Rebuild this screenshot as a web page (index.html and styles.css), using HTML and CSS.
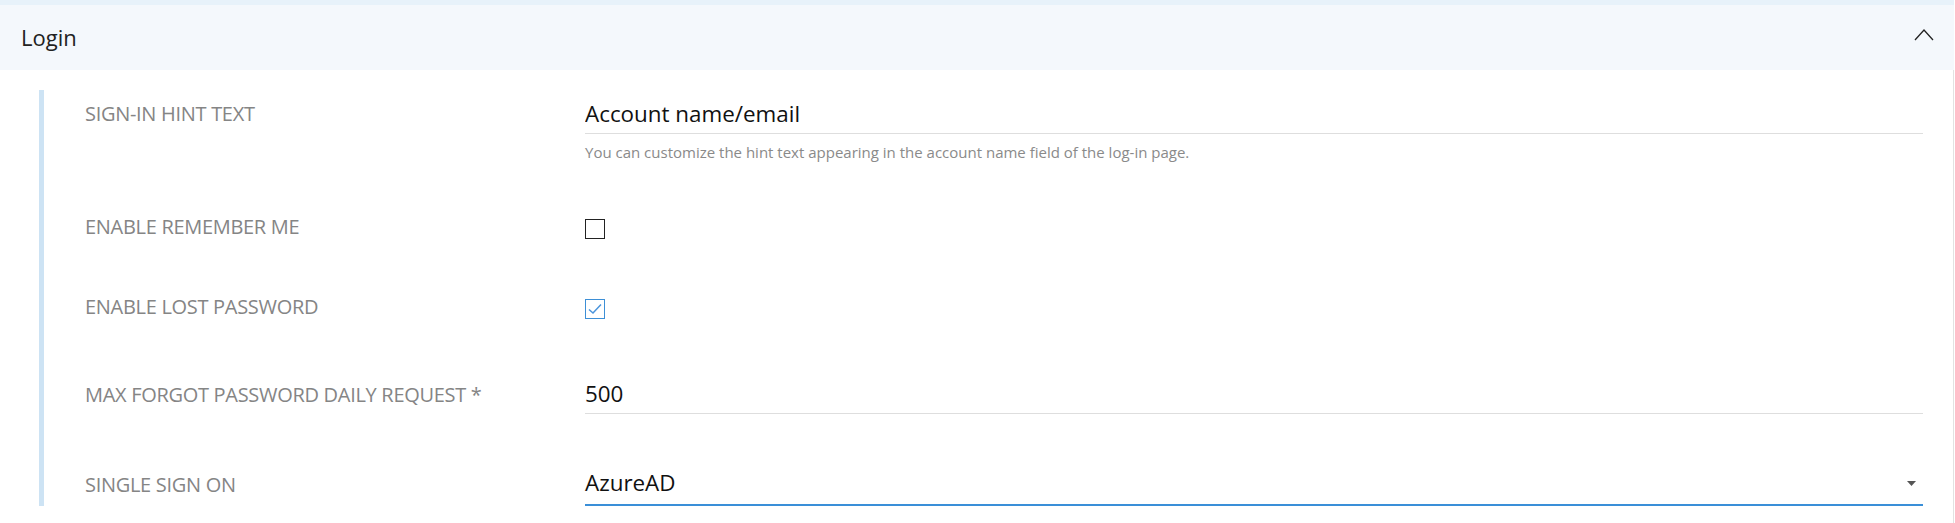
FILE: index.html
```html
<!DOCTYPE html>
<html lang="en">
<head>
    <meta charset="UTF-8">
    <meta name="viewport" content="width=device-width, initial-scale=1.0">
    <title>Login settings</title>
    <link rel="stylesheet" href="styles.css">
</head>
<body>
    <div class="panel">
        <div class="panel-top"></div>
        <div class="panel-header">
            <span class="panel-title">Login</span>
            <svg class="chevron" width="20" height="12" viewBox="0 0 20 12">
                <polyline points="1,11 10,1 19,11" fill="none" stroke="#222" stroke-width="1.3"/>
            </svg>
        </div>
        <div class="panel-body">
            <div class="fields">
                <div class="row row-hint">
                    <label class="field-label" for="hint">SIGN-IN HINT TEXT</label>
                    <div class="field">
                        <input class="text-input" id="hint" type="text" value="Account name/email">
                        <div class="field-hint">You can customize the hint text appearing in the account name field of the log-in page.</div>
                    </div>
                </div>

                <div class="row row-check row-remember">
                    <label class="field-label" for="remember">ENABLE REMEMBER ME</label>
                    <label class="check" for="remember">
                        <input type="checkbox" id="remember">
                        <span class="check-box"></span>
                    </label>
                </div>

                <div class="row row-check row-lost">
                    <label class="field-label" for="lost">ENABLE LOST PASSWORD</label>
                    <label class="check" for="lost">
                        <input type="checkbox" id="lost" checked>
                        <span class="check-box">
                            <svg width="16" height="16" viewBox="0 0 16 16">
                                <polyline points="2,8.5 6,12 14,3.5" fill="none" stroke="#4a94dc" stroke-width="1.5"/>
                            </svg>
                        </span>
                    </label>
                </div>

                <div class="row row-input row-max">
                    <label class="field-label" for="max">MAX FORGOT PASSWORD DAILY REQUEST *</label>
                    <div class="field">
                        <input class="text-input" id="max" type="text" value="500">
                    </div>
                </div>

                <div class="row row-input row-sso">
                    <label class="field-label">SINGLE SIGN ON</label>
                    <div class="field">
                        <div class="select">
                            <span>AzureAD</span>
                            <svg width="9" height="5" viewBox="0 0 9 5">
                                <polygon points="0,0 9,0 4.5,5" fill="#555"/>
                            </svg>
                        </div>
                    </div>
                </div>
            </div>
        </div>
    </div>
</body>
</html>
```

FILE: styles.css
```css
* {
    font-family: "Open Sans", "Noto Sans", sans-serif;
}

body {
    margin: 0;
    background-color: #fff;
}

.panel {
    width: 1954px;
}

.panel-top {
    height: 5px;
    background-color: #e7f2fa;
}

.panel-header {
    height: 65px;
    background-color: #f4f8fc;
    display: flex;
    justify-content: space-between;
    align-items: center;
    padding: 0 20px 2px 21px;
    box-sizing: border-box;
}

.panel-title {
    font-size: 22px;
    line-height: 30px;
    color: #222;
}

.chevron {
    margin-bottom: 3px;
}

.panel-body {
    border-right: 1px solid #e2e2e2;
    padding: 20px 30px 17px 39px;
}

.fields {
    border-left: 5px solid #cde3f4;
    padding-left: 41px;
}

.row {
    display: grid;
    grid-template-columns: 500px 1fr;
    align-items: start;
}

.field-label {
    display: block;
    font-size: 20px;
    line-height: 28px;
    letter-spacing: -0.3px;
    color: #858585;
}

.row-hint .field-label {
    margin-top: 10px;
}

.row-hint .field {
    margin-top: 8px;
}

.text-input {
    display: block;
    width: 100%;
    height: 36px;
    box-sizing: border-box;
    border: none;
    border-bottom: 1px solid #dedede;
    padding: 0 0 5px 0;
    margin: 0;
    font-size: 22.4px;
    line-height: 30px;
    color: #111;
    background: transparent;
    outline: none;
}

.field-hint {
    margin-top: 8px;
    font-size: 15px;
    line-height: 20px;
    color: #8a8a8a;
}

/* checkbox rows */
.row-check {
    height: 40px;
    align-items: center;
}

.row-check .field-label {
    margin-bottom: 4px;
}

.row-remember {
    margin-top: 47px;
}

.row-lost {
    margin-top: 40px;
}

.check {
    display: flex;
    cursor: pointer;
}

.check input {
    display: none;
}

.check-box {
    width: 20px;
    height: 20px;
    box-sizing: border-box;
    border: 1px solid #222;
    display: flex;
    align-items: center;
    justify-content: center;
}

.check input:checked + .check-box {
    border-color: #3d8fd6;
}

/* input rows */
.row-input .field-label {
    margin-top: 3px;
}

.row-max {
    margin-top: 49px;
}

.row-sso {
    margin-top: 54px;
}

.select {
    display: flex;
    justify-content: space-between;
    align-items: center;
    border-bottom: 2px solid #3a8fd8;
    padding: 0 7px 6px 0;
    font-size: 22.4px;
    line-height: 30px;
    color: #111;
}
```
